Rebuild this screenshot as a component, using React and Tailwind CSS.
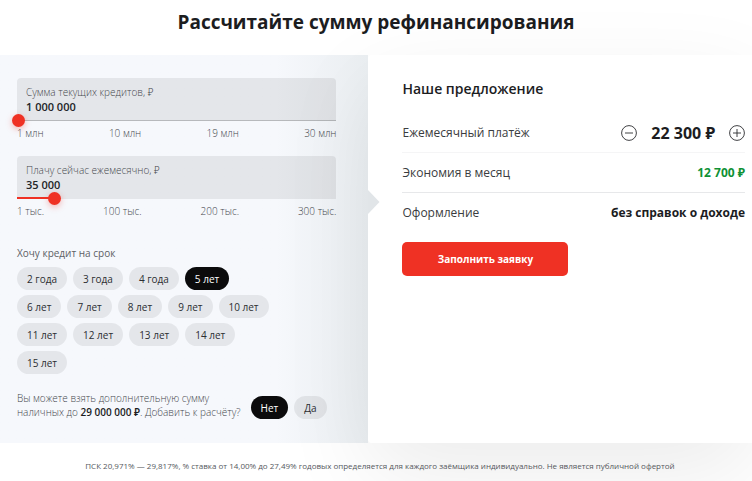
import React, { useState } from "react";

const TERMS = [
  "2 года", "3 года", "4 года", "5 лет", "6 лет", "7 лет", "8 лет",
  "9 лет", "10 лет", "11 лет", "12 лет", "13 лет", "14 лет", "15 лет",
];

const formatNumber = (value) => String(value).replace(/\B(?=(\d{3})+(?!\d))/g, " ");

function AmountField({ id, label, value, onChange, min, max, step, marks, underline }) {
  const percent = ((value - min) / (max - min)) * 100;

  const handleText = (e) => {
    const next = Number(e.target.value.replace(/\D/g, ""));
    onChange(Math.min(max, next));
  };

  return (
    <div>
      <div className={`rounded-t bg-black/7 px-[9px] pt-[7px] pb-[5px] ${underline ? "border-b border-black/20" : "border-b border-transparent"}`}>
        <label htmlFor={id} className="block text-[10px] leading-[14px] font-light text-[#44474c]">
          {label}
        </label>
        <input
          id={id}
          type="text"
          inputMode="numeric"
          value={formatNumber(value)}
          onChange={handleText}
          className="block w-full bg-transparent text-[11px] leading-4 font-semibold text-[#222427] outline-none"
        />
      </div>
      <div className="relative -mt-2 h-[13px]">
        <div className="absolute top-[6px] left-0 h-[2px] bg-[#ef3124]" style={{ width: `${percent}%` }} />
        <input
          type="range"
          aria-label={label}
          min={min}
          max={max}
          step={step}
          value={value}
          onChange={(e) => onChange(Number(e.target.value))}
          className="absolute top-0 -left-[5px] h-[14px] w-[calc(100%+10px)] cursor-pointer appearance-none bg-transparent outline-none [&::-webkit-slider-thumb]:h-[13px] [&::-webkit-slider-thumb]:w-[13px] [&::-webkit-slider-thumb]:appearance-none [&::-webkit-slider-thumb]:rounded-full [&::-webkit-slider-thumb]:bg-[#ef3124] [&::-webkit-slider-thumb]:shadow-[0_2px_6px_rgba(239,49,36,0.35)]"
        />
      </div>
      <div className="flex justify-between text-[10px] leading-[14px] font-light text-[#44474c]">
        {marks.map((mark) => (
          <span key={mark}>{mark}</span>
        ))}
      </div>
    </div>
  );
}

function Pill({ active, onClick, children }) {
  return (
    <button
      type="button"
      aria-pressed={active}
      onClick={onClick}
      className={`h-[23px] cursor-pointer rounded-full px-[10px] text-[10px] leading-4 ${
        active ? "bg-[#0b0b0c] text-white" : "bg-black/7 text-[#2c2e32]"
      }`}
    >
      {children}
    </button>
  );
}

function StepButton({ label, plus, onClick }) {
  return (
    <button type="button" aria-label={label} onClick={onClick} className="cursor-pointer text-[#2b2d30]">
      <svg width="16" height="16" viewBox="0 0 16 16" fill="none" stroke="currentColor">
        <circle cx="8" cy="8" r="7.4" strokeWidth="0.9" />
        <path d={plus ? "M4 8h8M8 4v8" : "M4 8h8"} strokeWidth="0.9" />
      </svg>
    </button>
  );
}

function OfferRow({ label, border, children }) {
  return (
    <div className={`flex h-10 items-center justify-between text-xs ${border}`}>
      <dt className="text-[#3a3c40]">{label}</dt>
      <dd>{children}</dd>
    </div>
  );
}

export default function App() {
  const [credit, setCredit] = useState(1000000);
  const [monthly, setMonthly] = useState(35000);
  const [term, setTerm] = useState("5 лет");
  const [extra, setExtra] = useState(false);
  const [payment, setPayment] = useState(22300);

  return (
    <main className="min-h-screen overflow-hidden bg-white font-['Open_Sans','Noto_Sans',sans-serif] text-[#1c1d1f]">
      <h1 className="pt-2 pb-[19px] text-center text-[19px] leading-7 font-bold">
        Рассчитайте сумму рефинансирования
      </h1>

      <div className="flex">
        <section className="w-[49%] bg-linear-to-r from-[#f6f8fc] from-75% to-[#ebeff2] pt-[23px] pr-8 pb-6 pl-[17px]">
          <AmountField
            id="credit"
            label="Сумма текущих кредитов, ₽"
            value={credit}
            onChange={setCredit}
            min={1000000}
            max={30000000}
            step={100000}
            marks={["1 млн", "10 млн", "19 млн", "30 млн"]}
            underline
          />
          <div className="mt-4">
            <AmountField
              id="monthly"
              label="Плачу сейчас ежемесячно, ₽"
              value={monthly}
              onChange={setMonthly}
              min={1000}
              max={300000}
              step={1000}
              marks={["1 тыс.", "100 тыс.", "200 тыс.", "300 тыс."]}
            />
          </div>

          <h2 className="mt-[25px] text-[10px] leading-5 font-normal text-[#5d6065]">Хочу кредит на срок</h2>
          <div className="mt-1 flex w-64 flex-wrap gap-x-[6px] gap-y-[5px]">
            {TERMS.map((item) => (
              <Pill key={item} active={item === term} onClick={() => setTerm(item)}>
                {item}
              </Pill>
            ))}
          </div>

          <div className="mt-[17px] flex items-end">
            <p className="text-[10px] leading-[14px] font-light whitespace-nowrap text-[#44474c]">
              Вы можете взять дополнительную сумму
              <br />
              наличных до <b className="font-semibold text-[#1c1d1f]">29 000 000 ₽</b>. Добавить к расчёту?
            </p>
            <div className="ml-[10px] flex gap-[6px]">
              <Pill active={!extra} onClick={() => setExtra(false)}>Нет</Pill>
              <Pill active={extra} onClick={() => setExtra(true)}>Да</Pill>
            </div>
          </div>
        </section>

        <section className="relative flex-1 rounded-l bg-white pt-6 pr-[7px] pl-[34px] shadow-[0_30px_90px_rgba(0,0,0,0.08)]">
          <svg className="absolute top-[135px] left-0" width="12" height="24" viewBox="0 0 12 24">
            <path d="M0 0L11.5 12L0 24z" fill="#e1e5e8" />
          </svg>
          <h2 className="text-[14px] leading-5 font-semibold">Наше предложение</h2>
          <dl className="mt-[14px]">
            <OfferRow label="Ежемесячный платёж" border="border-b border-[#f5f5f6]">
              <div className="flex items-center gap-[14px]">
                <StepButton label="Уменьшить платёж" onClick={() => setPayment(payment - 100)} />
                <span className="text-base leading-5 font-bold">{formatNumber(payment)} ₽</span>
                <StepButton label="Увеличить платёж" plus onClick={() => setPayment(payment + 100)} />
              </div>
            </OfferRow>
            <OfferRow label="Экономия в месяц" border="border-b border-[#e7e8ea]">
              <span className="font-bold text-[#0f9135]">{formatNumber(Math.max(0, monthly - payment))} ₽</span>
            </OfferRow>
            <OfferRow label="Оформление" border="border-0">
              <span className="font-bold">без справок о доходе</span>
            </OfferRow>
          </dl>
          <button
            type="button"
            className="mt-[9px] block h-[34px] w-[166px] cursor-pointer rounded-[5px] bg-[#ef3124] text-[10px] font-bold text-white"
          >
            Заполнить заявку
          </button>
        </section>
      </div>

      <p className="relative py-4 pl-2 text-center text-[8px] leading-[14px] text-[#55585d]">
        ПСК 20,971% — 29,817%, % ставка от 14,00% до 27,49% годовых определяется для каждого заёмщика индивидуально. Не является публичной офертой
      </p>
    </main>
  );
}
